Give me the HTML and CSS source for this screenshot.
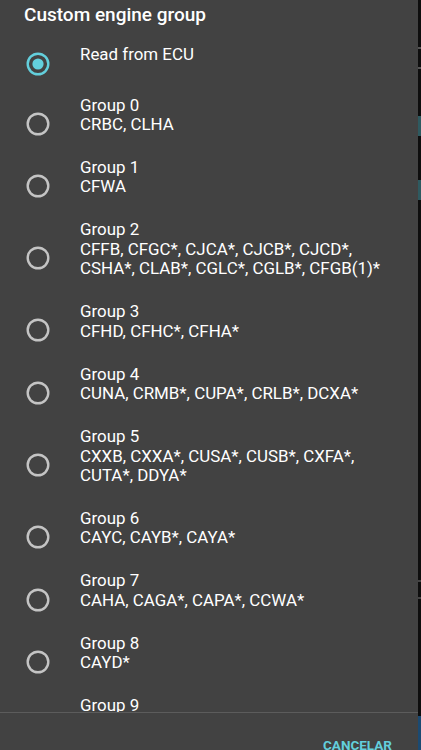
FILE: index.html
```html
<!DOCTYPE html>
<html>
<head>
<meta charset="utf-8">
<link rel="stylesheet" href="styles.css">
</head>
<body>
<div class="screen">
  <div class="dialog">
    <h1 class="title">Custom engine group</h1>
    <div class="list">
      <div class="row first">
        <span class="radio checked"><svg viewBox="0 0 24 24" width="24" height="24"><circle cx="12" cy="12" r="10.3" fill="none" stroke="currentColor" stroke-width="2.4"/><circle cx="12" cy="12" r="5.6" fill="currentColor"/></svg></span>
        <div class="text">Read from ECU</div>
      </div>
      <div class="row">
        <span class="radio"><svg viewBox="0 0 24 24" width="24" height="24"><circle cx="12" cy="12" r="10.3" fill="none" stroke="currentColor" stroke-width="2.4"/></svg></span>
        <div class="text">Group 0<br>CRBC, CLHA</div>
      </div>
      <div class="row">
        <span class="radio"><svg viewBox="0 0 24 24" width="24" height="24"><circle cx="12" cy="12" r="10.3" fill="none" stroke="currentColor" stroke-width="2.4"/></svg></span>
        <div class="text">Group 1<br>CFWA</div>
      </div>
      <div class="row">
        <span class="radio"><svg viewBox="0 0 24 24" width="24" height="24"><circle cx="12" cy="12" r="10.3" fill="none" stroke="currentColor" stroke-width="2.4"/></svg></span>
        <div class="text">Group 2<br>CFFB, CFGC*, CJCA*, CJCB*, CJCD*, CSHA*, CLAB*, CGLC*, CGLB*, CFGB(1)*</div>
      </div>
      <div class="row">
        <span class="radio"><svg viewBox="0 0 24 24" width="24" height="24"><circle cx="12" cy="12" r="10.3" fill="none" stroke="currentColor" stroke-width="2.4"/></svg></span>
        <div class="text">Group 3<br>CFHD, CFHC*, CFHA*</div>
      </div>
      <div class="row">
        <span class="radio"><svg viewBox="0 0 24 24" width="24" height="24"><circle cx="12" cy="12" r="10.3" fill="none" stroke="currentColor" stroke-width="2.4"/></svg></span>
        <div class="text">Group 4<br>CUNA, CRMB*, CUPA*, CRLB*, DCXA*</div>
      </div>
      <div class="row">
        <span class="radio"><svg viewBox="0 0 24 24" width="24" height="24"><circle cx="12" cy="12" r="10.3" fill="none" stroke="currentColor" stroke-width="2.4"/></svg></span>
        <div class="text">Group 5<br>CXXB, CXXA*, CUSA*, CUSB*, CXFA*, CUTA*, DDYA*</div>
      </div>
      <div class="row">
        <span class="radio"><svg viewBox="0 0 24 24" width="24" height="24"><circle cx="12" cy="12" r="10.3" fill="none" stroke="currentColor" stroke-width="2.4"/></svg></span>
        <div class="text">Group 6<br>CAYC, CAYB*, CAYA*</div>
      </div>
      <div class="row">
        <span class="radio"><svg viewBox="0 0 24 24" width="24" height="24"><circle cx="12" cy="12" r="10.3" fill="none" stroke="currentColor" stroke-width="2.4"/></svg></span>
        <div class="text">Group 7<br>CAHA, CAGA*, CAPA*, CCWA*</div>
      </div>
      <div class="row">
        <span class="radio"><svg viewBox="0 0 24 24" width="24" height="24"><circle cx="12" cy="12" r="10.3" fill="none" stroke="currentColor" stroke-width="2.4"/></svg></span>
        <div class="text">Group 8<br>CAYD*</div>
      </div>
      <div class="row last">
        <span class="radio"><svg viewBox="0 0 24 24" width="24" height="24"><circle cx="12" cy="12" r="10.3" fill="none" stroke="currentColor" stroke-width="2.4"/></svg></span>
        <div class="text">Group 9</div>
      </div>
    </div>
    <div class="buttons">
      <span class="btn">CANCELAR</span>
    </div>
  </div>
  <div class="edge"></div>
</div>
</body>
</html>
```

FILE: styles.css
```css
html, body {
  margin: 0;
  padding: 0;
  background: #0e0e0e;
}

.screen {
  display: flex;
  width: 421px;
  height: 750px;
  overflow: hidden;
}

.dialog {
  width: 418px;
  height: 750px;
  background: #424242;
  display: flex;
  flex-direction: column;
  font-family: Roboto, "Liberation Sans", sans-serif;
  color: #ffffff;
}

.title {
  margin: 0 0 8px 0;
  padding: 3px 24px 0 24px;
  font-size: 19px;
  line-height: 24px;
  font-weight: 500;
  height: 24px;
}

.list {
  flex: 1;
  overflow: hidden;
  min-height: 0;
}

.row {
  display: flex;
  align-items: center;
}

.row.first {
  min-height: 57.6px;
}

.row.last {
  align-items: flex-start;
}

.row.last .radio {
  margin-top: 19px;
}

.radio {
  width: 24px;
  height: 24px;
  margin-left: 25.5px;
  margin-right: 30.5px;
  flex-shrink: 0;
  color: #c4c4c4;
  display: flex;
}

.radio.checked {
  color: #63cfdc;
}

.text {
  flex: 1;
  padding: 3px 24px 20.4px 0;
  font-size: 16.9px;
  line-height: 19.5px;
}

.buttons {
  flex-shrink: 0;
  border-top: 1px solid #5c5c5c;
  display: flex;
  justify-content: flex-end;
  padding: 24px 26px 0 0;
  box-sizing: border-box;
  height: 38px;
}

.btn {
  font-size: 13.5px;
  line-height: 16px;
  font-weight: 700;
  color: #63cfdc;
}

.edge {
  width: 3px;
  height: 750px;
  background: linear-gradient(to bottom,
    #0e0e0e 0, #0e0e0e 47px, #555 47px, #555 49px, #0e0e0e 49px,
    #0e0e0e 67px, #555 67px, #555 69px, #0e0e0e 69px,
    #0e0e0e 116px, #2e5a60 116px, #2e5a60 136px, #0e0e0e 136px,
    #0e0e0e 180px, #2e5a60 180px, #2e5a60 200px, #0e0e0e 200px,
    #0e0e0e 580px, #444 580px, #444 582px, #0e0e0e 582px,
    #0e0e0e 597px, #444 597px, #444 599px, #0e0e0e 599px,
    #0e0e0e 716px, #1b4a72 716px, #1b4a72 750px);
}
```
